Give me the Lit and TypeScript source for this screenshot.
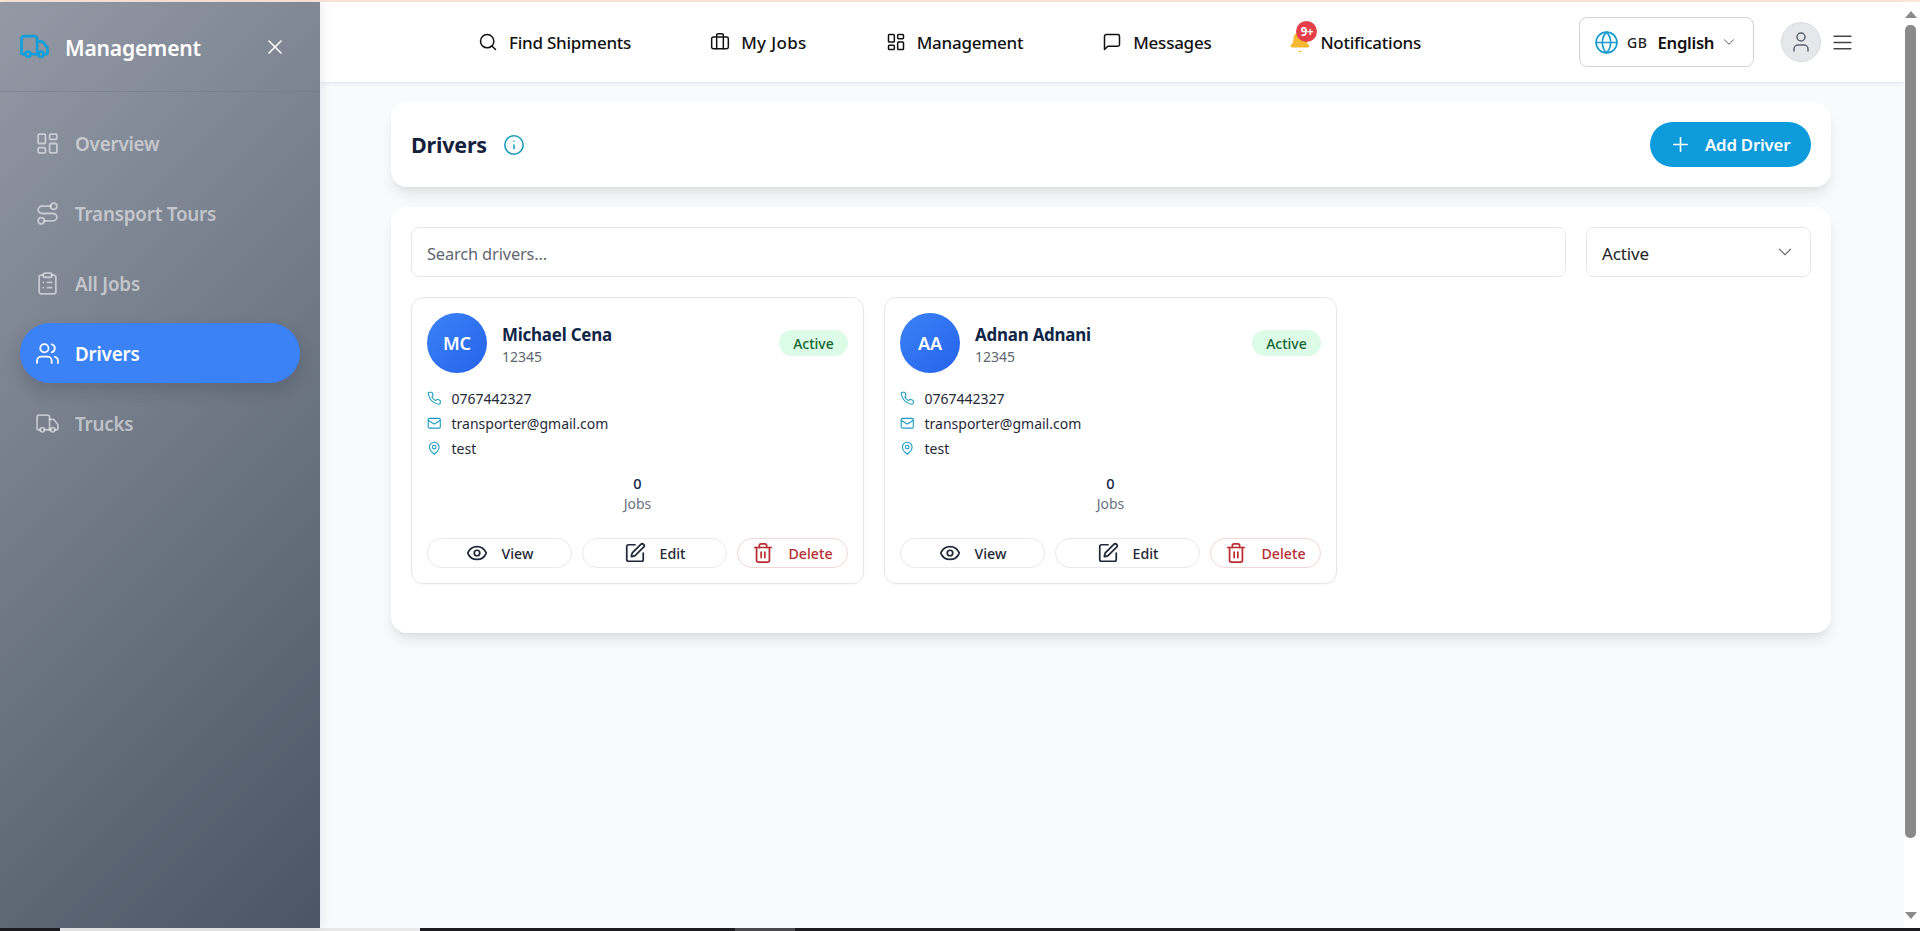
import { LitElement, html, css, svg } from "lit";
import { customElement } from "lit/decorators.js";

const I: Record<string, any> = {
  truck: svg`<path d="M14 18V6a2 2 0 0 0-2-2H4a2 2 0 0 0-2 2v11a1 1 0 0 0 1 1h2"/><path d="M15 18H9"/><path d="M19 18h2a1 1 0 0 0 1-1v-3.65a1 1 0 0 0-.22-.624l-3.48-4.35A1 1 0 0 0 17.52 8H14"/><circle cx="17" cy="18" r="2"/><circle cx="7" cy="18" r="2"/>`,
  x: svg`<path d="M18 6 6 18"/><path d="m6 6 12 12"/>`,
  dash: svg`<rect width="7" height="9" x="3" y="3" rx="1"/><rect width="7" height="5" x="14" y="3" rx="1"/><rect width="7" height="9" x="14" y="12" rx="1"/><rect width="7" height="5" x="3" y="16" rx="1"/>`,
  route: svg`<circle cx="6" cy="19" r="3"/><path d="M9 19h8.5a3.5 3.5 0 0 0 0-7h-11a3.5 3.5 0 0 1 0-7H15"/><circle cx="18" cy="5" r="3"/>`,
  clip: svg`<rect width="8" height="4" x="8" y="2" rx="1"/><path d="M16 4h2a2 2 0 0 1 2 2v14a2 2 0 0 1-2 2H6a2 2 0 0 1-2-2V6a2 2 0 0 1 2-2h2"/><path d="M12 11h4"/><path d="M12 16h4"/><path d="M8 11h.01"/><path d="M8 16h.01"/>`,
  users: svg`<path d="M16 21v-2a4 4 0 0 0-4-4H6a4 4 0 0 0-4 4v2"/><circle cx="9" cy="7" r="4"/><path d="M22 21v-2a4 4 0 0 0-3-3.87"/><path d="M16 3.13a4 4 0 0 1 0 7.75"/>`,
  search: svg`<circle cx="11" cy="11" r="8"/><path d="m21 21-4.3-4.3"/>`,
  brief: svg`<path d="M16 20V4a2 2 0 0 0-2-2h-4a2 2 0 0 0-2 2v16"/><rect width="20" height="14" x="2" y="6" rx="2"/>`,
  msg: svg`<path d="M21 15a2 2 0 0 1-2 2H7l-4 4V5a2 2 0 0 1 2-2h14a2 2 0 0 1 2 2z"/>`,
  globe: svg`<circle cx="12" cy="12" r="10"/><path d="M12 2a14.5 14.5 0 0 0 0 20 14.5 14.5 0 0 0 0-20"/><path d="M2 12h20"/>`,
  chev: svg`<path d="m6 9 6 6 6-6"/>`,
  user: svg`<path d="M19 21v-2a4 4 0 0 0-4-4H9a4 4 0 0 0-4 4v2"/><circle cx="12" cy="7" r="4"/>`,
  menu: svg`<path d="M4 6h16"/><path d="M4 12h16"/><path d="M4 18h16"/>`,
  plus: svg`<path d="M5 12h14"/><path d="M12 5v14"/>`,
  info: svg`<circle cx="12" cy="12" r="10"/><path d="M12 16v-4"/><path d="M12 8h.01"/>`,
  phone: svg`<path d="M22 16.92v3a2 2 0 0 1-2.18 2 19.79 19.79 0 0 1-8.63-3.07 19.5 19.5 0 0 1-6-6 19.79 19.79 0 0 1-3.07-8.67A2 2 0 0 1 4.11 2h3a2 2 0 0 1 2 1.72 12.84 12.84 0 0 0 .7 2.81 2 2 0 0 1-.45 2.11L8.09 9.91a16 16 0 0 0 6 6l1.27-1.27a2 2 0 0 1 2.11-.45 12.84 12.84 0 0 0 2.81.7A2 2 0 0 1 22 16.92z"/>`,
  mail: svg`<rect width="20" height="16" x="2" y="4" rx="2"/><path d="m22 7-8.97 5.7a1.94 1.94 0 0 1-2.06 0L2 7"/>`,
  pin: svg`<path d="M20 10c0 6-8 12-8 12s-8-6-8-12a8 8 0 0 1 16 0Z"/><circle cx="12" cy="10" r="3"/>`,
  eye: svg`<path d="M2.062 12.348a1 1 0 0 1 0-.696 10.75 10.75 0 0 1 19.876 0 1 1 0 0 1 0 .696 10.75 10.75 0 0 1-19.876 0"/><circle cx="12" cy="12" r="3"/>`,
  pen: svg`<path d="M12 3H5a2 2 0 0 0-2 2v14a2 2 0 0 0 2 2h14a2 2 0 0 0 2-2v-7"/><path d="M18.375 2.625a1 1 0 0 1 3 3l-9.013 9.014a2 2 0 0 1-.853.505l-2.873.84a.5.5 0 0 1-.62-.62l.84-2.873a2 2 0 0 1 .506-.852z"/>`,
  trash: svg`<path d="M3 6h18"/><path d="M19 6v14c0 1-1 2-2 2H7c-1 0-2-1-2-2V6"/><path d="M8 6V4c0-1 1-2 2-2h4c1 0 2 1 2 2v2"/><path d="M10 11v6"/><path d="M14 11v6"/>`,
};

const ic = (n: string, cls: string) =>
  html`<svg class="ic ${cls}" viewBox="0 0 24 24" fill="none" stroke="currentColor" stroke-width="2" stroke-linecap="round" stroke-linejoin="round">${I[n]}</svg>`;

const drivers = [
  { i: "MC", n: "Michael Cena" },
  { i: "AA", n: "Adnan Adnani" },
];

@customElement("app-root")
export class AppRoot extends LitElement {
  static styles = css`
    :host { display: block; height: 931px; overflow: hidden; font-family: "Noto Sans", "Open Sans", sans-serif; color: #111827; background: #f8fafc; }
    * { box-sizing: border-box; }
    .ic { display: block; flex: none; }
    .page { display: flex; flex-direction: column; height: 931px; }
    .topline { height: 2px; flex: none; background: #fbe6d8; }
    .body { flex: 1; min-height: 0; display: flex; }
    .task { height: 3px; flex: none; display: flex; background: #1c1c1e; }
    .task i { display: block; }
    .task .a { width: 60px; }
    .task .b { width: 360px; background: #e8e8e8; }
    .task .c { width: 315px; }
    .task .d { width: 60px; background: #4a4a4c; }

    .side { width: 320px; flex: none; display: flex; flex-direction: column; background: linear-gradient(135deg, #939aa6, #4b5563); box-shadow: 2px 0 10px rgba(15,23,42,.08); position: relative; z-index: 2; }
    .side-head { height: 90px; flex: none; display: flex; align-items: center; padding: 0 33px 0 19px; border-bottom: 1px solid rgba(100,110,125,.35); }
    .logo { width: 31px; height: 31px; color: #129ed9; margin-right: 15px; stroke-width: 2.1; }
    .side-title { flex: 1; color: #fff; font-size: 21.1px; font-weight: 600; letter-spacing: -.2px; padding-top: 1px; }
    .close { width: 24px; height: 24px; color: #fff; stroke-width: 1.6; }
    .side-nav { display: flex; flex-direction: column; gap: 10px; padding: 21px 20px; }
    .nav-i { height: 60px; border-radius: 30px; display: flex; align-items: center; padding: 2px 0 0 15px; gap: 15px; color: rgba(255,255,255,.55); font-size: 18.8px; font-weight: 600; letter-spacing: -.2px; }
    .nav-i .ic { width: 25px; height: 25px; stroke-width: 1.7; margin-top: -2px; }
    .nav-i.on { background: #3b82f6; color: #fff; box-shadow: 0 8px 16px rgba(40,50,70,.22); }

    .col { flex: 1; min-width: 0; display: flex; flex-direction: column; }
    .head { height: 80px; flex: none; background: #fff; display: flex; align-items: center; padding: 0 49px 0 158px; box-shadow: 0 1px 4px rgba(100,130,180,.18); position: relative; z-index: 1; }
    .links { display: flex; align-items: center; gap: 79px; flex: 1; }
    .link { display: flex; align-items: center; gap: 11px; font-size: 17px; font-weight: 500; letter-spacing: -.25px; color: #111; position: relative; }
    .link.wide { letter-spacing: .35px; }
    .link .ic { width: 20px; height: 20px; stroke-width: 1.8; }
    .link .ic.bell { width: 24px; height: 24px; color: #f6b933; stroke-width: 1; margin: 0 -3px 0 -2px; }
    .bellwrap { position: relative; display: block; }
    .badge { position: absolute; left: 6px; top: -9px; width: 21px; height: 21px; border-radius: 50%; background: #e5404a; color: #fff; font-size: 11.5px; font-weight: 700; display: flex; align-items: center; justify-content: center; letter-spacing: -.3px; }
    .lang { width: 175px; height: 50px; border: 1px solid #cfd3d8; border-radius: 8px; display: flex; align-items: center; padding-left: 14px; flex: none; }
    .lang .globe { width: 25px; height: 25px; color: #1a9ccf; stroke-width: 1.6; }
    .gb { font-size: 14px; margin-left: 8px; font-weight: 500; color: #222; letter-spacing: .6px; }
    .en { font-size: 16.7px; margin-left: 10px; font-weight: 600; letter-spacing: -.3px; color: #111; }
    .lang .chev { width: 18px; height: 18px; margin-left: 6px; color: #777; stroke-width: 1.4; }
    .avatar { width: 40px; height: 40px; border-radius: 50%; background: #e5e7eb; border: 1px solid #d8dbe0; margin-left: 27px; display: flex; align-items: center; justify-content: center; color: #5b6470; flex: none; }
    .avatar .ic { width: 24px; height: 24px; stroke-width: 1.5; }
    .burger { width: 25px; height: 25px; margin-left: 9px; color: #444; stroke-width: 1.6; }

    .main { flex: 1; min-height: 0; padding: 20px 73px 0 71px; display: flex; flex-direction: column; gap: 20px; }
    .card { background: #fff; border-radius: 16px; box-shadow: 0 10px 15px -3px rgba(0,0,0,.09), 0 4px 6px -2px rgba(0,0,0,.05); }
    .t-card { height: 85px; flex: none; display: flex; align-items: center; padding: 0 20px; }
    h1 { margin: 0; font-size: 21.5px; font-weight: 700; color: #14213d; letter-spacing: -.2px; }
    .info { width: 22px; height: 22px; margin-left: 16px; color: #1a9ab8; stroke-width: 1.7; }
    .add { margin-left: auto; width: 161px; height: 45px; border-radius: 23px; background: #0e9bdb; color: #fff; display: flex; align-items: center; padding-left: 18.5px; gap: 13.5px; font-size: 16.8px; font-weight: 600; letter-spacing: -.2px; }
    .add .ic { width: 23px; height: 23px; stroke-width: 1.7; }
    .l-card { flex: none; padding: 20px 20px 49px; display: flex; flex-direction: column; gap: 20px; }
    .filters { display: flex; gap: 20px; height: 50px; }
    .search, .select { border: 1px solid #e5e7eb; border-radius: 8px; display: flex; align-items: center; }
    .search { flex: 1; padding: 2px 0 0 15px; color: #5f6670; letter-spacing: -.15px; font-size: 16.4px; }
    .select { width: 225px; padding: 2px 14px 0 15px; color: #222; justify-content: space-between; letter-spacing: -.15px; font-size: 17px; }
    .select .ic { width: 22px; height: 22px; color: #777; stroke-width: 1.3; margin-top: -2px; }
    .grid { display: grid; grid-template-columns: repeat(3, 453px); gap: 20px; }
    .drv { height: 287px; border: 1px solid #e5e7eb; border-radius: 12px; padding: 15px; display: flex; flex-direction: column; box-shadow: 0 1px 2px rgba(0,0,0,.03); }
    .top { display: flex; align-items: center; height: 60px; }
    .av { width: 60px; height: 60px; border-radius: 50%; background: linear-gradient(135deg, #3b82f6, #2563eb); color: #fff; display: flex; align-items: center; justify-content: center; font-size: 18px; font-weight: 600; flex: none; }
    .who { margin: 5px 0 0 15px; flex: 1; }
    .name { font-size: 16.9px; font-weight: 700; color: #0f2547; line-height: 22px; letter-spacing: -.2px; }
    .id { font-size: 14px; color: #5f6670; line-height: 22px; }
    .st { width: 69px; height: 26px; border-radius: 13px; background: #dcfce7; color: #166534; font-size: 14px; font-weight: 500; display: flex; align-items: center; justify-content: center; }
    .rows { margin-top: 13px; display: flex; flex-direction: column; }
    .row { height: 25px; display: flex; align-items: center; gap: 10px; font-size: 14px; color: #1f2937; }
    .row .ic { width: 14.5px; height: 14.5px; color: #1a9bc4; stroke-width: 1.8; }
    .stat { margin-top: 11px; text-align: center; }
    .stat b { display: block; font-size: 14.5px; font-weight: 500; line-height: 22px; color: #0f2547; }
    .stat span { display: block; font-size: 14px; line-height: 20px; color: #6b7280; }
    .acts { margin-top: auto; display: flex; gap: 10px; }
    .btn { flex: 0 0 145px; height: 30px; border: 1px solid #e9e9ec; border-radius: 15px; display: flex; align-items: center; justify-content: center; gap: 14px; font-size: 14.2px; font-weight: 500; color: #1f2937; }
    .btn .ic { width: 22px; height: 22px; stroke-width: 1.9; }
    .btn.del { flex: 0 0 111px; color: #b92e33; border-color: #f1d6d6; }

    .sb { width: 16px; flex: none; background: #fff; display: flex; flex-direction: column; align-items: center; position: relative; z-index: 2; padding: 9px 3px 0 0; }
    .up, .dn { width: 0; height: 0; border-left: 6px solid transparent; border-right: 6px solid transparent; flex: none; }
    .up { border-bottom: 7px solid #8a8a8a; }
    .dn { border-top: 7px solid #8a8a8a; margin-top: auto; margin-bottom: 9px; }
    .thumb { width: 11px; height: 813px; background: #8a8a8a; border-radius: 5px; margin-top: 7px; }
  `;

  render() {
    const nav: [string, string][] = [["dash", "Overview"], ["route", "Transport Tours"], ["clip", "All Jobs"], ["users", "Drivers"], ["truck", "Trucks"]];
    return html`<div class="page">
      <div class="topline"></div>
      <div class="body">
        <aside class="side">
          <div class="side-head">
            ${ic("truck", "logo")}
            <div class="side-title">Management</div>
            ${ic("x", "close")}
          </div>
          <nav class="side-nav">
            ${nav.map(([i, t]) => html`<div class="nav-i ${t === "Drivers" ? "on" : ""}">${ic(i, "")}<span>${t}</span></div>`)}
          </nav>
        </aside>
        <div class="col">
          <header class="head">
            <div class="links">
              <div class="link">${ic("search", "")}<span>Find Shipments</span></div>
              <div class="link wide">${ic("brief", "")}<span>My Jobs</span></div>
              <div class="link">${ic("dash", "")}<span>Management</span></div>
              <div class="link">${ic("msg", "")}<span>Messages</span></div>
              <div class="link">
                <span class="bellwrap">
                  <svg class="ic bell" viewBox="0 0 24 24" fill="currentColor" stroke="currentColor" stroke-linecap="round" stroke-linejoin="round"><path d="M10.268 21a2 2 0 0 0 3.464 0"/><path d="M3.262 15.326A1 1 0 0 0 4 17h16a1 1 0 0 0 .74-1.673C19.41 13.956 18 12.499 18 8A6 6 0 0 0 6 8c0 4.499-1.411 5.956-2.738 7.326"/></svg>
                  <span class="badge">9+</span>
                </span>
                <span>Notifications</span>
              </div>
            </div>
            <div class="lang">
              ${ic("globe", "globe")}
              <span class="gb">GB</span>
              <span class="en">English</span>
              ${ic("chev", "chev")}
            </div>
            <div class="avatar">${ic("user", "")}</div>
            ${ic("menu", "burger")}
          </header>
          <main class="main">
            <section class="card t-card">
              <h1>Drivers</h1>
              ${ic("info", "info")}
              <div class="add">${ic("plus", "")}<span>Add Driver</span></div>
            </section>
            <section class="card l-card">
              <div class="filters">
                <div class="search">Search drivers...</div>
                <div class="select"><span>Active</span>${ic("chev", "")}</div>
              </div>
              <div class="grid">
                ${drivers.map((d) => html`<article class="drv">
                  <div class="top">
                    <div class="av">${d.i}</div>
                    <div class="who"><div class="name">${d.n}</div><div class="id">12345</div></div>
                    <div class="st">Active</div>
                  </div>
                  <div class="rows">
                    <div class="row">${ic("phone", "")}<span>0767442327</span></div>
                    <div class="row">${ic("mail", "")}<span>transporter@gmail.com</span></div>
                    <div class="row">${ic("pin", "")}<span>test</span></div>
                  </div>
                  <div class="stat"><b>0</b><span>Jobs</span></div>
                  <div class="acts">
                    <div class="btn">${ic("eye", "")}<span>View</span></div>
                    <div class="btn">${ic("pen", "")}<span>Edit</span></div>
                    <div class="btn del">${ic("trash", "")}<span>Delete</span></div>
                  </div>
                </article>`)}
              </div>
            </section>
          </main>
        </div>
        <div class="sb"><div class="up"></div><div class="thumb"></div><div class="dn"></div></div>
      </div>
      <div class="task"><i class="a"></i><i class="b"></i><i class="c"></i><i class="d"></i></div>
    </div>`;
  }
}
